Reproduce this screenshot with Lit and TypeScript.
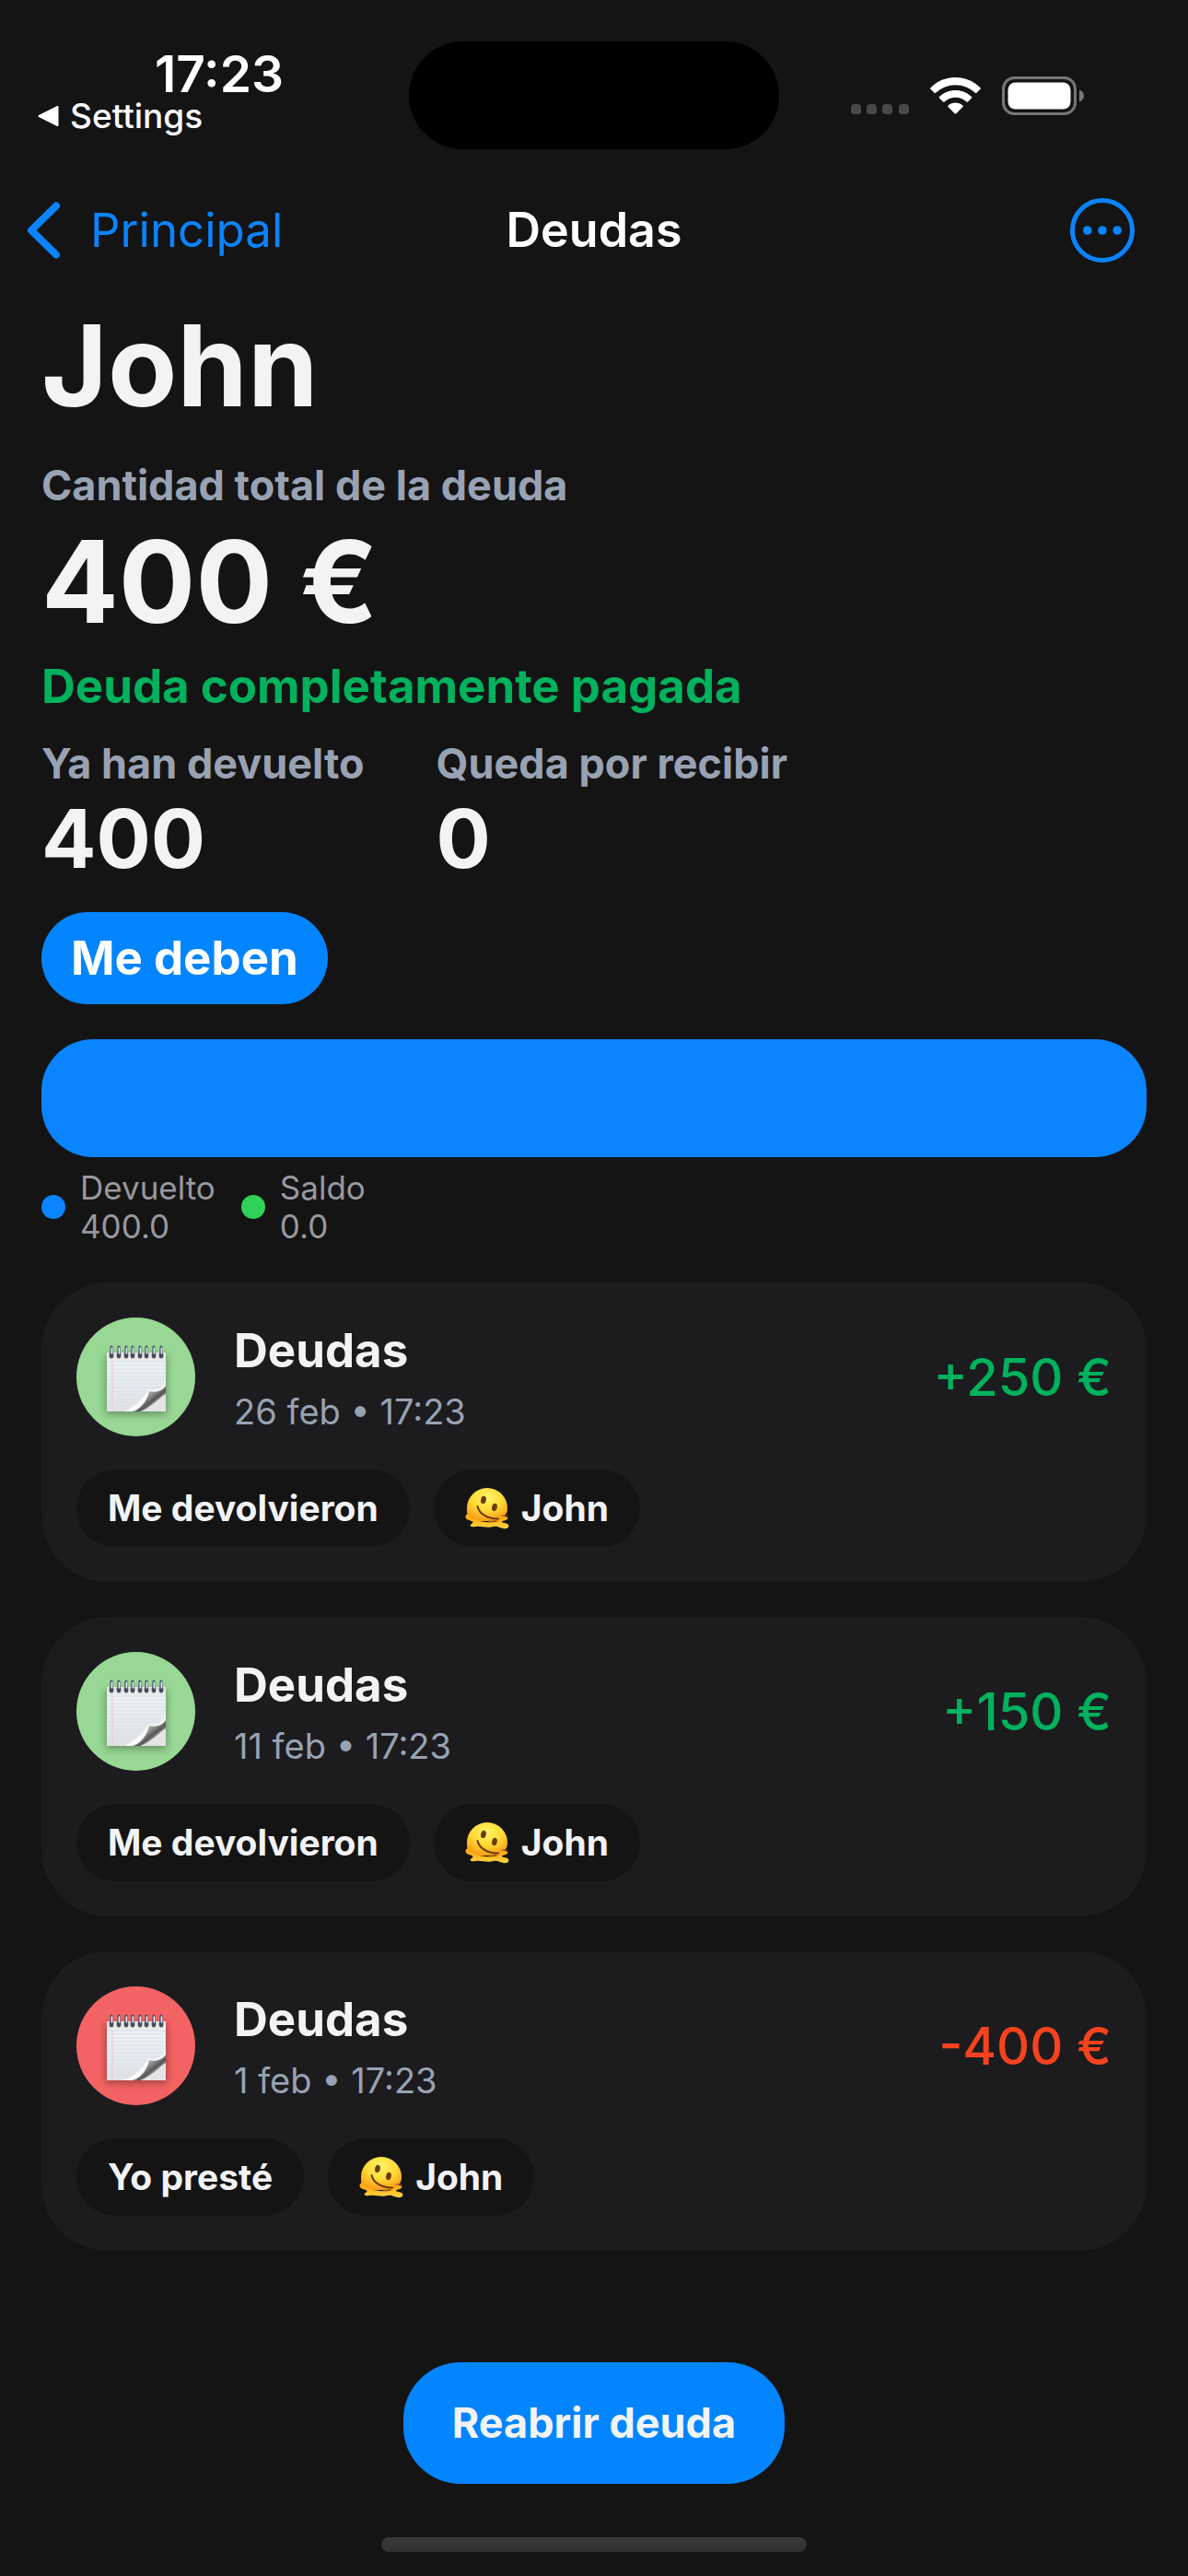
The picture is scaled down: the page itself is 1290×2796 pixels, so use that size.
import { LitElement, html, css, svg, nothing } from "lit";
import { customElement, property } from "lit/decorators.js";

interface Movement {
  title: string;
  date: string;
  amount: string;
  kind: "income" | "expense";
  action: string;
  person: string;
}

const MOVEMENTS: Movement[] = [
  { title: "Deudas", date: "26 feb • 17:23", amount: "+250 €", kind: "income", action: "Me devolvieron", person: "John" },
  { title: "Deudas", date: "11 feb • 17:23", amount: "+150 €", kind: "income", action: "Me devolvieron", person: "John" },
  { title: "Deudas", date: "1 feb • 17:23", amount: "-400 €", kind: "expense", action: "Yo presté", person: "John" },
];

const LEGEND = [
  { label: "Devuelto", value: 400, tone: "blue" },
  { label: "Saldo", value: 0, tone: "green" },
];

/* Spiral notepad with a curled lower right corner, 72 x 80. */
const notepadIcon = html`
  <svg class="notepad" viewBox="0 -3 72 80" aria-hidden="true">
    <defs>
      <linearGradient id="paper" x1="0" y1="0" x2="0" y2="1">
        <stop offset="0" stop-color="#e2e2e2" />
        <stop offset="0.2" stop-color="#f0f1f2" />
        <stop offset="1" stop-color="#e0e1e4" />
      </linearGradient>
      <linearGradient id="curl" x1="47" y1="54" x2="58" y2="68" gradientUnits="userSpaceOnUse">
        <stop offset="0" stop-color="#b4b4b4" />
        <stop offset="0.3" stop-color="#8c8c8c" />
        <stop offset="0.6" stop-color="#555555" />
        <stop offset="0.8" stop-color="#9a9a9a" />
        <stop offset="1" stop-color="#e0e0e2" />
      </linearGradient>
      <linearGradient id="lip" x1="30" y1="56" x2="46" y2="68" gradientUnits="userSpaceOnUse">
        <stop offset="0" stop-color="#ececee" />
        <stop offset="0.5" stop-color="#ffffff" />
        <stop offset="1" stop-color="#f4f4f4" />
      </linearGradient>
      <filter id="soft" x="-30%" y="-30%" width="160%" height="160%">
        <feGaussianBlur stdDeviation="4" />
      </filter>
    </defs>
    <rect x="3" y="13" width="66" height="64" fill="#000" opacity="0.34" filter="url(#soft)" />
    <rect x="4" y="10" width="64" height="64" fill="#e4e4e6" />
    <path d="M4 10H68V44C66 50 60 53 50 52C48 62 42 72 26 74H4Z" fill="url(#paper)" />
    ${[20, 24, 28, 32, 36, 40, 44, 48].map((y) => svg`<path d="M4 ${y}H68" stroke="#d3e2ee" stroke-width="1" />`)}
    ${[52, 56, 60, 64, 68].map((y) => svg`<path d="M4 ${y}H${46 - (y - 52)}" stroke="#d3e2ee" stroke-width="1" />`)}
    <path d="M10 20V74" stroke="#f2c4c6" stroke-width="1" />
    <path d="M22 74C32 71 42 62 48 53C49 50 51 51 53 51C60 51 66 47 68 38V50L50 56L36 74Z" fill="url(#lip)" />
    <path d="M50 52C59 54 65 51 68 46V55C60 60 52 70 40 74H32C42 71 48 62 50 52Z" fill="url(#curl)" />
    ${[9, 17, 25, 32, 40, 47, 55, 63].map(
      (x) => svg`
        <ellipse cx=${x} cy="13" rx="2.4" ry="3.6" fill="#55554f" />
        <path d="M${x} 4V14" stroke="#3d4a68" stroke-width="3" stroke-linecap="round" />
        <path d="M${x + 0.4} 5V11" stroke="#e6ebf6" stroke-width="1.6" stroke-linecap="round" />
      `,
    )}
  </svg>
`;

/* Melting smiley, 48 x 46. */
const meltingFace = html`
  <svg class="face" viewBox="0 0 48 46" aria-hidden="true">
    <defs>
      <radialGradient id="skin" cx="0.5" cy="0.3" r="0.75">
        <stop offset="0" stop-color="#fff56a" />
        <stop offset="0.5" stop-color="#ffdb35" />
        <stop offset="0.85" stop-color="#fca81c" />
        <stop offset="1" stop-color="#f99a12" />
      </radialGradient>
      <linearGradient id="puddle" x1="0" y1="0" x2="0" y2="1">
        <stop offset="0" stop-color="#fba21a" />
        <stop offset="0.5" stop-color="#ffb81c" />
        <stop offset="1" stop-color="#ffd84a" />
      </linearGradient>
    </defs>
    <path d="M2 23A22 22 0 0 1 46 23C46 27 45 29 43 31L40 37H9L5 34C2 31 2 27 2 23Z" fill="url(#skin)" />
    <path
      d="M3 29C-1 31 0 35 4 36C8 37 10 38 7 40C4 42 6 44 11 43C19 42 23 45 31 43C36 42 40 46 45 45C49 43 48 40 43 39C38 38 40 37 44 36C48 34 47 32 42 32C38 38 30 39 22 38C13 37 7 35 3 29Z"
      fill="url(#puddle)"
    />
    <ellipse cx="20" cy="14" rx="2.800" ry="4.200" fill="#6b3a06" transform="rotate(12 20 14)" />
    <ellipse cx="32" cy="22" rx="2.800" ry="4.200" fill="#6b3a06" transform="rotate(12 32 22)" />
    <path d="M13.500 21C15 29 25 35 36 34.500" fill="none" stroke="#6b3a06" stroke-width="2" stroke-linecap="round" />
    <path d="M26 37C29 37.500 32 37 34 36" fill="none" stroke="#b56a0c" stroke-width="1.400" stroke-linecap="round" />
    <path d="M40 31H46" stroke="#8c4d08" stroke-width="1" stroke-linecap="round" />
  </svg>
`;

const FONT = css`
  :host {
    font-family: Inter, "Noto Sans", "Liberation Sans", sans-serif;
  }
`;

@customElement("status-bar")
export class StatusBar extends LitElement {
  static styles = [
    FONT,
    css`
      :host {
        display: block;
        color: #fff;
      }
      .bar {
        display: grid;
        grid-template-columns: 1fr auto 1fr;
        align-items: center;
        padding: 45px 0 28px;
      }
      .left {
        align-self: start;
        display: flex;
        flex-direction: column;
        align-items: flex-start;
        padding: 8px 0 0 40px;
      }
      .time {
        padding-left: 128px;
        font-size: 55px;
        line-height: 54px;
        font-weight: 600;
      }
      .return {
        display: flex;
        align-items: center;
        gap: 12px;
        font-size: 37px;
        line-height: 38px;
        font-weight: 500;
        color: inherit;
        text-decoration: none;
      }
      .triangle {
        width: 24px;
        height: 24px;
      }
      .island {
        width: 402px;
        height: 117px;
        border-radius: 59px;
        background: #000;
      }
      .right {
        display: flex;
        align-items: center;
        justify-content: flex-end;
        gap: 23px;
        padding-right: 112px;
      }
      .signal {
        width: 63px;
        height: 42px;
      }
      .wifi {
        width: 55px;
        height: 42px;
      }
      .battery {
        width: 90px;
        height: 42px;
      }
    `,
  ];

  render() {
    return html`
      <div class="bar">
        <div class="left">
          <time class="time">17:23</time>
          <a class="return" href="#settings">
            <svg class="triangle" viewBox="0 0 24 24" aria-hidden="true">
              <path d="M2.500 12L22.500 2V22Z" fill="#fff" stroke="#fff" stroke-width="2" stroke-linejoin="round" />
            </svg>
            Settings
          </a>
        </div>
        <div class="island"></div>
        <div class="right">
          <svg class="signal" viewBox="0 0 63 42" aria-hidden="true">
            ${[0, 17, 34, 52].map((x) => svg`<rect x=${x} y="30" width="11" height="11" rx="3.500" fill="#484848" />`)}
          </svg>
          <svg class="wifi" viewBox="0 0 55 42" fill="#fff" aria-hidden="true">
            <path d="M27.500 1C38 1 47.500 5 54.500 12.200Q55.200 13 54.500 13.800L50.500 17.800Q49.700 18.500 49 17.800A31 31 0 0 0 6 17.800Q5.300 18.500 4.500 17.800L0.500 13.800Q-0.200 13 0.500 12.200C7.500 5 17 1 27.500 1Z" />
            <path d="M27.500 15C34 15 40.300 17.600 45 22Q45.700 22.800 45 23.500L41 27.500Q40.200 28.200 39.500 27.500A17.500 17.500 0 0 0 15.500 27.500Q14.800 28.200 14 27.500L10 23.500Q9.300 22.800 10 22C14.700 17.600 21 15 27.500 15Z" />
            <path d="M27.500 28.500C30.500 28.500 33.300 29.600 35.500 31.500Q36.200 32.200 35.500 33L28.300 40.200Q27.500 41 26.700 40.200L19.500 33Q18.800 32.200 19.500 31.500C21.700 29.600 24.500 28.500 27.500 28.500Z" />
          </svg>
          <svg class="battery" viewBox="0 0 90 42" aria-hidden="true">
            <rect x="1.500" y="1.500" width="78" height="39" rx="12" fill="none" stroke="#777" stroke-width="3" />
            <rect x="6.500" y="6.500" width="68" height="29" rx="8" fill="#fff" />
            <path d="M84 14.500C87 15.500 89 18 89 21S87 26.500 84 27.500Z" fill="#777" />
          </svg>
        </div>
      </div>
    `;
  }
}

@customElement("movement-card")
export class MovementCard extends LitElement {
  @property({ attribute: false }) movement?: Movement;

  static styles = [
    FONT,
    css`
      :host {
        display: block;
      }
      .card {
        display: flex;
        flex-direction: column;
        gap: 36px;
        padding: 38px;
        border-radius: 72px;
        background: #1c1c1e;
      }
      .head {
        display: flex;
        align-items: center;
        gap: 42px;
      }
      .badge {
        display: flex;
        align-items: center;
        justify-content: center;
        flex: none;
        width: 129px;
        height: 129px;
        border-radius: 50%;
      }
      .badge.income {
        background: #99d794;
      }
      .badge.expense {
        background: #f36363;
      }
      .notepad {
        width: 72px;
        height: 80px;
        overflow: visible;
      }
      .about {
        display: flex;
        flex-direction: column;
        flex: 1;
        gap: 14px;
      }
      .title {
        margin: 0;
        font-size: 51px;
        line-height: 60px;
        font-weight: 700;
        color: #f2f3f5;
      }
      .date {
        font-size: 38px;
        line-height: 44px;
        color: #98a2b3;
      }
      .amount {
        font-size: 56px;
        line-height: 60px;
        font-weight: 500;
      }
      .amount.income {
        color: #00b15d;
      }
      .amount.expense {
        color: #f5431f;
      }
      .chips {
        display: flex;
        gap: 26px;
      }
      .chip {
        display: flex;
        align-items: center;
        gap: 13px;
        padding: 0 34px;
        border-radius: 42px;
        background: #141414;
        font-size: 39px;
        line-height: 84px;
        font-weight: 700;
        color: #f2f3f5;
      }
      .face {
        width: 48px;
        height: 46px;
      }
    `,
  ];

  render() {
    const m = this.movement;
    if (!m) return nothing;
    return html`
      <article class="card">
        <div class="head">
          <span class="badge ${m.kind}">${notepadIcon}</span>
          <div class="about">
            <h2 class="title">${m.title}</h2>
            <span class="date">${m.date}</span>
          </div>
          <span class="amount ${m.kind}">${m.amount}</span>
        </div>
        <div class="chips">
          <span class="chip">${m.action}</span>
          <span class="chip">${meltingFace}${m.person}</span>
        </div>
      </article>
    `;
  }
}

@customElement("app-root")
export class AppRoot extends LitElement {
  static styles = [
    FONT,
    css`
      :host {
        display: flex;
        flex-direction: column;
        min-height: 100vh;
        background: #141414;
        color: #f2f3f5;
      }
      .nav {
        display: grid;
        grid-template-columns: 1fr auto 1fr;
        align-items: center;
        padding: 0 28px;
        font-size: 52px;
        line-height: 120px;
      }
      .back {
        display: flex;
        align-items: center;
        gap: 30px;
        color: #0a84ff;
        font-size: 51px;
        text-decoration: none;
      }
      .chevron {
        width: 40px;
        height: 64px;
      }
      .heading {
        color: #fff;
        font-weight: 600;
      }
      .more {
        display: flex;
        justify-self: end;
        margin-right: 30px;
        padding: 0;
        border: 0;
        background: none;
      }
      .more-icon {
        width: 70px;
        height: 70px;
      }
      .content {
        display: flex;
        flex-direction: column;
        padding: 12px 45px 0;
      }
      .name,
      .total,
      .status,
      .label,
      .value {
        margin: 0;
      }
      .name {
        font-size: 123px;
        line-height: 150px;
        font-weight: 700;
      }
      .label {
        font-size: 45px;
        line-height: 50px;
        font-weight: 700;
        color: #98a2b3;
      }
      .total-label {
        margin-top: 30px;
      }
      .total {
        margin-top: 9px;
        font-size: 124px;
        line-height: 140px;
        font-weight: 700;
      }
      .status {
        margin-top: 14px;
        font-size: 51px;
        line-height: 60px;
        font-weight: 700;
        color: #00b15d;
      }
      .figures {
        display: flex;
        gap: 78px;
        margin: 29px 0 0;
      }
      .value {
        margin-top: 6px;
        font-size: 88px;
        line-height: 100px;
        font-weight: 700;
      }
      .tag {
        align-self: flex-start;
        margin-top: 30px;
        padding: 0 32px;
        border-radius: 50px;
        background: #0385ff;
        color: #fff;
        font-size: 51px;
        line-height: 100px;
        font-weight: 700;
      }
      .progress {
        display: flex;
        height: 128px;
        margin-top: 38px;
        border-radius: 56px;
        overflow: hidden;
        background: #30d158;
      }
      .fill {
        background: #0a84ff;
      }
      .legend {
        display: flex;
        gap: 28px;
        margin: 12px 0 0;
        padding: 0;
        list-style: none;
        font-size: 35px;
        line-height: 42px;
        color: #98989f;
      }
      .entry {
        display: flex;
        align-items: center;
        gap: 16px;
      }
      .entry-text {
        display: flex;
        flex-direction: column;
      }
      .dot {
        width: 26px;
        height: 26px;
        border-radius: 50%;
      }
      .dot.blue {
        background: #0a84ff;
      }
      .dot.green {
        background: #30d158;
      }
      .movements {
        display: flex;
        flex-direction: column;
        gap: 38px;
        margin: 40px 0 0;
        padding: 0;
        list-style: none;
      }
      .footer {
        display: flex;
        flex-direction: column;
        align-items: center;
        gap: 58px;
        margin-top: auto;
        padding: 38px 0 26px;
      }
      .reopen {
        padding: 0 53px;
        border: 0;
        border-radius: 62px;
        background: #0385ff;
        color: #f2f3f5;
        font-family: inherit;
        font-size: 45px;
        line-height: 132px;
        font-weight: 700;
      }
      .home {
        width: 462px;
        height: 16px;
        border-radius: 8px;
        background: linear-gradient(#393939, #303030);
      }
    `,
  ];

  render() {
    const total = LEGEND.reduce((sum, entry) => sum + entry.value, 0);
    return html`
      <status-bar></status-bar>
      <nav class="nav">
        <a class="back" href="#principal">
          <svg class="chevron" viewBox="0 0 40 64" aria-hidden="true">
            <path d="M33 5.500L6 32L33 58.500" fill="none" stroke="#0a84ff" stroke-width="8" stroke-linecap="round" stroke-linejoin="round" />
          </svg>
          Principal
        </a>
        <span class="heading">Deudas</span>
        <button class="more" type="button" aria-label="Más opciones">
          <svg class="more-icon" viewBox="0 0 70 70" aria-hidden="true">
            <circle cx="35" cy="35" r="32.500" fill="none" stroke="#0a84ff" stroke-width="5" />
            ${[18.8, 35, 51.2].map((x) => svg`<circle cx=${x} cy="35" r="4.800" fill="#0a84ff" />`)}
          </svg>
        </button>
      </nav>
      <main class="content">
        <h1 class="name">John</h1>
        <p class="label total-label">Cantidad total de la deuda</p>
        <p class="total">400 €</p>
        <p class="status">Deuda completamente pagada</p>
        <dl class="figures">
          <div>
            <dt class="label">Ya han devuelto</dt>
            <dd class="value">400</dd>
          </div>
          <div>
            <dt class="label">Queda por recibir</dt>
            <dd class="value">0</dd>
          </div>
        </dl>
        <span class="tag">Me deben</span>
        <div class="progress" role="img" aria-label="Devuelto 400.0, Saldo 0.0">
          <div class="fill" style="width: ${(LEGEND[0].value / total) * 100}%"></div>
        </div>
        <ul class="legend">
          ${LEGEND.map(
            (entry) => html`
              <li class="entry">
                <span class="dot ${entry.tone}"></span>
                <span class="entry-text">
                  <span>${entry.label}</span>
                  <span>${entry.value.toFixed(1)}</span>
                </span>
              </li>
            `,
          )}
        </ul>
        <ul class="movements">
          ${MOVEMENTS.map((m) => html`<li><movement-card .movement=${m}></movement-card></li>`)}
        </ul>
      </main>
      <footer class="footer">
        <button class="reopen" type="button">Reabrir deuda</button>
        <div class="home"></div>
      </footer>
    `;
  }
}
